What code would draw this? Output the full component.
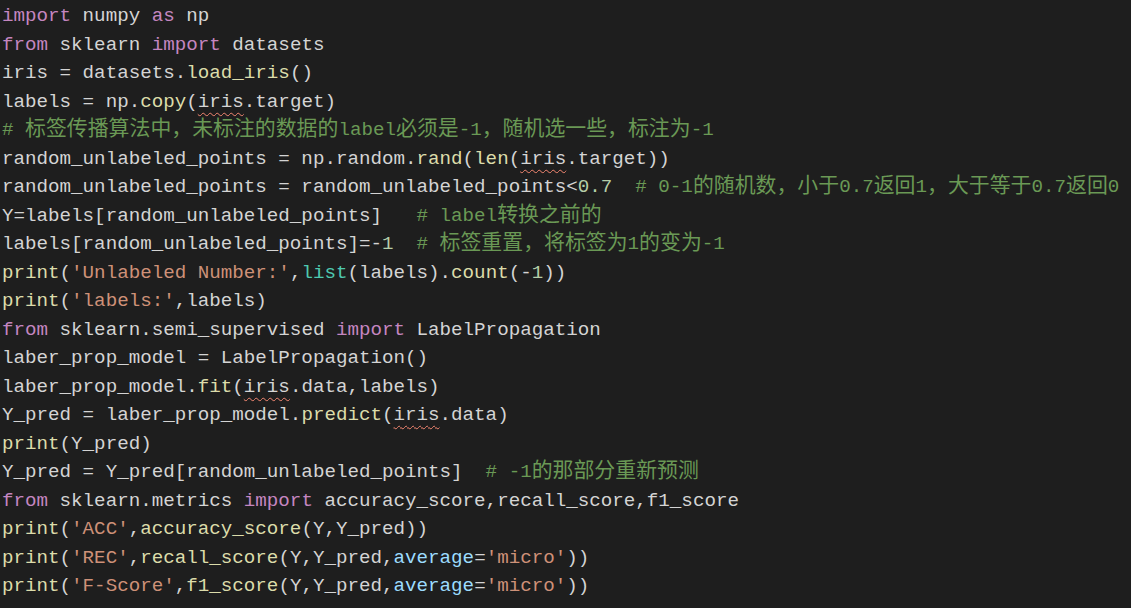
type Tok = [string, string?];

const kw = "text-[#c586c0]";
const fn = "text-[#dcdcaa]";
const str = "text-[#ce9178]";
const num = "text-[#b5cea8]";
const cm = "text-[#6a9955]";
const bi = "text-[#4ec9b0]";
const pa = "text-[#9cdcfe]";
const sq = "underline decoration-wavy decoration-[#f48771] decoration-1 underline-offset-[5px]";

// wider CJK glyphs, as the editor draws them
const Comment = ({ text }: { text: string }) => {
  const parts = text.split(/([\u3000-\u9fff\uff00-\uffef]+)/);
  return (
    <span className={cm}>
      {parts.map((p, i) =>
        /[\u3000-\u9fff\uff00-\uffef]/.test(p) ? (
          <span key={i} className="text-[20.9px]">{p}</span>
        ) : (
          <span key={i}>{p}</span>
        )
      )}
    </span>
  );
};

const lines: Tok[][] = [
  [["import", kw], [" numpy "], ["as", kw], [" np"]],
  [["from", kw], [" sklearn "], ["import", kw], [" datasets"]],
  [["iris = datasets."], ["load_iris", fn], ["()"]],
  [["labels = np."], ["copy", fn], ["("], ["iris", sq], [".target)"]],
  [["# 标签传播算法中，未标注的数据的label必须是-1，随机选一些，标注为-1", "comment"]],
  [["random_unlabeled_points = np.random."], ["rand", fn], ["("], ["len", fn], ["("], ["iris", sq], [".target))"]],
  [["random_unlabeled_points = random_unlabeled_points<"], ["0.7", num], ["  "], ["# 0-1的随机数，小于0.7返回1，大于等于0.7返回0", "comment"]],
  [["Y=labels[random_unlabeled_points]   "], ["# label转换之前的", "comment"]],
  [["labels[random_unlabeled_points]=-"], ["1", num], ["  "], ["# 标签重置，将标签为1的变为-1", "comment"]],
  [["print", fn], ["("], ["'Unlabeled Number:'", str], [","], ["list", bi], ["(labels)."], ["count", fn], ["(-"], ["1", num], ["))"]],
  [["print", fn], ["("], ["'labels:'", str], [",labels)"]],
  [["from", kw], [" sklearn.semi_supervised "], ["import", kw], [" LabelPropagation"]],
  [["laber_prop_model = LabelPropagation()"]],
  [["laber_prop_model."], ["fit", fn], ["("], ["iris", sq], [".data,labels)"]],
  [["Y_pred = laber_prop_model."], ["predict", fn], ["("], ["iris", sq], [".data)"]],
  [["print", fn], ["(Y_pred)"]],
  [["Y_pred = Y_pred[random_unlabeled_points]  "], ["# -1的那部分重新预测", "comment"]],
  [["from", kw], [" sklearn.metrics "], ["import", kw], [" accuracy_score,recall_score,f1_score"]],
  [["print", fn], ["("], ["'ACC'", str], [","], ["accuracy_score", fn], ["(Y,Y_pred))"]],
  [["print", fn], ["("], ["'REC'", str], [","], ["recall_score", fn], ["(Y,Y_pred,"], ["average", pa], ["="], ["'micro'", str], ["))"]],
  [["print", fn], ["("], ["'F-Score'", str], [","], ["f1_score", fn], ["(Y,Y_pred,"], ["average", pa], ["="], ["'micro'", str], ["))"]],
];

const App = () => {
  return (
    <div className="min-h-screen w-full bg-[#1e1e1e] pt-[2px] pl-[2px] font-['Liberation_Mono','Noto_Sans_CJK_SC',monospace] text-[19.2px] leading-[28.5px] text-[#d4d4d4]">
      {lines.map((line, i) => (
        <div key={i} className="h-[28.5px] whitespace-pre">
          {line.map(([t, c], j) =>
            c === "comment" ? (
              <Comment key={j} text={t} />
            ) : (
              <span key={j} className={c}>{t}</span>
            )
          )}
        </div>
      ))}
    </div>
  );
};

export default App;
